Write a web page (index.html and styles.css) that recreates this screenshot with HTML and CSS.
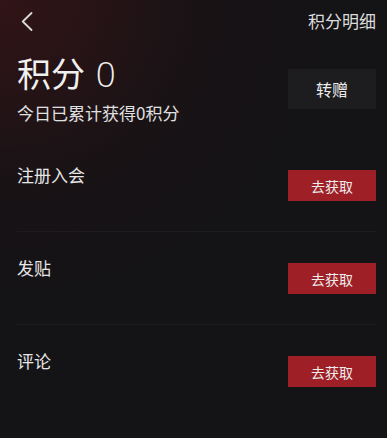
FILE: index.html
```html
<!DOCTYPE html>
<html lang="zh-CN">
<head>
<meta charset="utf-8">
<title>积分</title>
<link rel="stylesheet" href="styles.css">
</head>
<body>
<div class="page">
  <header class="topbar">
    <span class="back">
      <svg width="12" height="19" viewBox="0 0 12 19"><path d="M10.5 1 L1.8 9.5 L10.5 18" fill="none" stroke="#d9d9d9" stroke-width="1.8" stroke-linecap="round" stroke-linejoin="round"/></svg>
    </span>
    <span class="detail">积分明细</span>
  </header>
  <section class="summary">
    <div class="score">
      <h1 class="total">积分 <span class="num">0</span></h1>
      <p class="today">今日已累计获得0积分</p>
    </div>
    <button class="gift">转赠</button>
  </section>
  <ul class="tasks">
    <li class="task"><span class="label">注册入会</span><button class="go">去获取</button></li>
    <li class="task"><span class="label">发贴</span><button class="go">去获取</button></li>
    <li class="task"><span class="label">评论</span><button class="go">去获取</button></li>
  </ul>
</div>
</body>
</html>
```

FILE: styles.css
```css
html, body {
  margin: 0;
  padding: 0;
  height: 100%;
}
body {
  background: #141316;
  font-family: "Noto Sans CJK SC", "Noto Sans", sans-serif;
  color: #e6e6e6;
}
.page {
  min-height: 100%;
  padding: 0 11px 0 17px;
  box-sizing: border-box;
  background:
    radial-gradient(ellipse 330px 300px at 0 0, rgba(60, 20, 22, 0.75), rgba(40, 18, 20, 0.25) 60%, rgba(20, 19, 22, 0) 100%),
    #141316;
}
.topbar {
  height: 40px;
  display: flex;
  align-items: center;
  justify-content: space-between;
}
.back {
  display: flex;
  margin-left: 4px;
  margin-top: 3px;
}
.detail {
  font-size: 17px;
  color: #dcdcdc;
  margin-top: 1px;
}
.summary {
  display: flex;
  justify-content: space-between;
  align-items: flex-start;
  margin-bottom: 14px;
}
.total {
  margin: 12px 0 0;
  font-size: 34px;
  font-weight: 400;
  line-height: 42px;
  color: #f0f0f0;
}
.num {
  margin-left: 3px;
  font-family: "Open Sans", "Noto Sans", sans-serif;
  font-weight: 300;
  font-size: 35px;
}
.today {
  margin: 6px 0 0;
  font-size: 17px;
  line-height: 24px;
  color: #e0e0e0;
}
.gift {
  margin-top: 29px;
  width: 88px;
  height: 40px;
  border: 0;
  background: #1d1c1f;
  color: #ececec;
  font-family: inherit;
  font-size: 16px;
  padding: 0;
}
.tasks {
  list-style: none;
  margin: 0;
  padding: 0;
}
.task {
  height: 92px;
  display: flex;
  justify-content: space-between;
  align-items: flex-start;
  border-bottom: 1px solid #1c1b1f;
}
.task:last-child {
  border-bottom: 0;
}
.label {
  margin-top: 24px;
  font-size: 17px;
  line-height: 24px;
  color: #e6e6e6;
}
.go {
  margin-top: 31px;
  width: 88px;
  height: 31px;
  border: 0;
  padding: 0;
  background: #9e1f26;
  color: #ececec;
  font-family: inherit;
  font-size: 14px;
}
```
